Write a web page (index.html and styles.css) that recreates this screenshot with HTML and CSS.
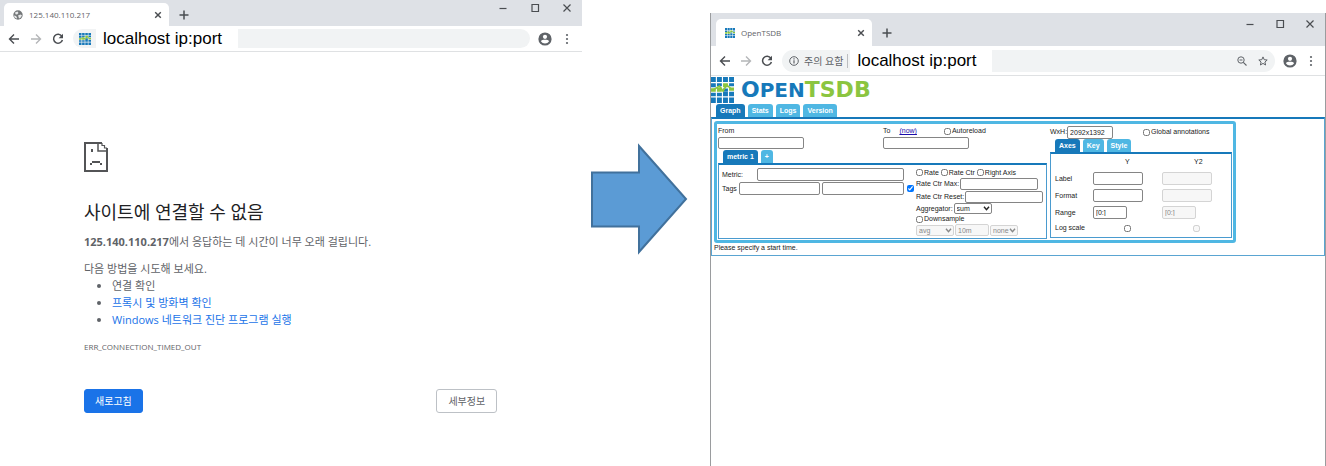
FILE: index.html
```html
<!DOCTYPE html>
<html lang="ko">
<head>
<meta charset="utf-8">
<title>OpenTSDB</title>
<link rel="stylesheet" href="styles.css">
</head>
<body>
<svg class="sprite" aria-hidden="true">
  <symbol id="back" viewBox="0 0 12 12"><path d="M11 6H2M6 1.5 1.5 6 6 10.5" fill="none" stroke="currentColor" stroke-width="1.4"/></symbol>
  <symbol id="forward" viewBox="0 0 12 12"><path d="M1 6h9M6 1.5 10.5 6 6 10.5" fill="none" stroke="currentColor" stroke-width="1.4"/></symbol>
  <symbol id="reload" viewBox="0 0 12 12"><path d="M9.8 3.2A4.5 4.5 0 1 0 10.4 7" fill="none" stroke="currentColor" stroke-width="1.5"/><path d="M11 .8v4.4H6.6z" fill="currentColor"/></symbol>
  <symbol id="dots" viewBox="0 0 12 12"><circle cx="6" cy="2" r="1.1"/><circle cx="6" cy="6" r="1.1"/><circle cx="6" cy="10" r="1.1"/></symbol>
  <symbol id="profile" viewBox="0 0 14 14"><circle cx="7" cy="7" r="6.6"/><circle cx="7" cy="4.8" r="2.1" fill="#fff"/><path d="M2.9 9.3C3.4 7.9 5 7.700 7 7.700s3.600.2 4.100 1.600A4.900 4.900 0 0 1 7 11.600a4.900 4.900 0 0 1-4.100-2.300z" fill="#fff"/></symbol>
  <symbol id="min" viewBox="0 0 10 10"><path d="M1.500 5.500h7" stroke="currentColor" stroke-width="1.200"/></symbol>
  <symbol id="max" viewBox="0 0 10 10"><path d="M2 1.500h6.500v7H2z" fill="none" stroke="currentColor" stroke-width="1.200"/></symbol>
  <symbol id="close" viewBox="0 0 10 10"><path d="m1.500 1.500 7 7m0-7-7 7" fill="none" stroke="currentColor" stroke-width="1.200"/></symbol>
  <symbol id="tab-close" viewBox="0 0 10 10"><path d="m1.500 1.500 7 7m0-7-7 7" fill="none" stroke="currentColor" stroke-width="1.800"/></symbol>
  <symbol id="plus" viewBox="0 0 10 10"><path d="M5 .5v9M.5 5h9" fill="none" stroke="currentColor" stroke-width="1.500"/></symbol>
  <symbol id="globe" viewBox="0 0 10 10"><circle cx="5" cy="5" r="4.700" fill="#747779"/><path d="M2 2.500 4.500 1.500l1 1.500L4 4.500 2.500 4.200zM5 5.500l2.500-1 1.500 1L7.500 7.800 6 8.500 5.500 6.800zM1 5.500 3 6l1 1.500-.5 1.200C2 8 1.200 7 1 5.500z" fill="#e8e9ea"/></symbol>
  <symbol id="mark" viewBox="0 0 22 26" preserveAspectRatio="none">
    <g fill="#1779ba"><path d="M0 0h4.600v5H0zM5.700 0h4.700v5H5.700zM11.500 0h4.700v5h-4.700zM17.300 0H22v5h-4.700zM0 6.200h4.600v4H0zM5.700 6.200h4.700v3H5.700zM17.300 6.200H22v3h-4.700zM11.500 11.500h4.700v3h-4.700zM0 15.800h4.600v3.400H0zM5.700 15.800h4.700v3.400H5.700zM11.500 14.800h4.700v4.400h-4.700zM17.300 14.800H22v4.400h-4.700zM0 20.600h4.600V26H0zM5.700 20.600h4.700V26H5.700zM11.500 20.600h4.700V26h-4.700zM17.300 20.600H22V26h-4.700z"/></g>
    <g fill="#8bc540"><path d="M0 11.200h4.600v3.600H0zM5.700 10.400h4.700v4.400H5.700zM11.500 6.200h4.700v4h-4.700zM17.300 10.400H22v3.400h-4.700z"/><path d="M2 13 8 9l3.500 5L15 8l5 4.500" fill="none" stroke="#8bc540" stroke-width="1.600"/></g>
  </symbol>
  <symbol id="chevron" viewBox="0 0 8 6"><path d="m1 1 3 3.500L7 1" fill="none" stroke="currentColor" stroke-width="1.700"/></symbol>
</svg>

<main class="scene">
  <section class="browser browser-error">
    <header class="tabstrip">
      <div class="tab"><svg class="fav"><use href="#globe"/></svg><span class="tab-title">125.140.110.217</span><button class="icon-btn" aria-label="탭 닫기"><svg class="i8"><use href="#tab-close"/></svg></button></div>
      <button class="icon-btn new-tab" aria-label="새 탭"><svg class="i10"><use href="#plus"/></svg></button>
      <div class="win-controls">
        <button class="icon-btn" aria-label="최소화"><svg class="i10"><use href="#min"/></svg></button>
        <button class="icon-btn" aria-label="최대화"><svg class="i10"><use href="#max"/></svg></button>
        <button class="icon-btn" aria-label="닫기"><svg class="i10"><use href="#close"/></svg></button>
      </div>
    </header>
    <nav class="toolbar">
      <button class="icon-btn" aria-label="뒤로"><svg class="i12"><use href="#back"/></svg></button>
      <button class="icon-btn dim" aria-label="앞으로"><svg class="i12"><use href="#forward"/></svg></button>
      <button class="icon-btn" aria-label="새로고침"><svg class="i12"><use href="#reload"/></svg></button>
      <div class="address"><svg class="site-icon"><use href="#mark"/></svg><span class="url">localhost ip:port</span></div>
      <button class="icon-btn" aria-label="프로필"><svg class="i14"><use href="#profile"/></svg></button>
      <button class="icon-btn menu" aria-label="메뉴"><svg class="i12"><use href="#dots"/></svg></button>
    </nav>
    <article class="error">
      <svg class="sad" viewBox="0 0 24 30"><path d="M18 1H1v28h22V6" fill="none" stroke="#535456" stroke-width="2"/><path d="M14 1v8h9" fill="none" stroke="#535456" stroke-width="1.500"/><path d="M18 1v2.500h2.500V6H23" fill="none" stroke="#535456" stroke-width="1.200"/><path d="M7 7h2v3H7zM8 19h8v2H8zM6 21h2v2H6zM16 21h2v2h-2z" fill="#535456"/></svg>
      <h1>사이트에 연결할 수 없음</h1>
      <p><strong>125.140.110.217</strong>에서 응답하는 데 시간이 너무 오래 걸립니다.</p>
      <div class="suggest">
        <p>다음 방법을 시도해 보세요.</p>
        <ul>
          <li>연결 확인</li>
          <li><a href="#proxy">프록시 및 방화벽 확인</a></li>
          <li><a href="#diagnose">Windows 네트워크 진단 프로그램 실행</a></li>
        </ul>
      </div>
      <p class="code">ERR_CONNECTION_TIMED_OUT</p>
      <div class="actions"><button class="btn primary">새로고침</button><button class="btn">세부정보</button></div>
    </article>
  </section>

  <svg class="arrow" viewBox="0 0 98 112"><path d="M2 29.500h47V3l47 53-47 53V83.500H2z" fill="#5b9bd5" stroke="#41719c" stroke-width="2"/></svg>

  <section class="browser browser-tsdb">
    <header class="tabstrip">
      <div class="tab"><svg class="fav"><use href="#mark"/></svg><span class="tab-title">OpenTSDB</span><button class="icon-btn" aria-label="탭 닫기"><svg class="i8"><use href="#tab-close"/></svg></button></div>
      <button class="icon-btn new-tab" aria-label="새 탭"><svg class="i10"><use href="#plus"/></svg></button>
      <div class="win-controls">
        <button class="icon-btn" aria-label="최소화"><svg class="i10"><use href="#min"/></svg></button>
        <button class="icon-btn" aria-label="최대화"><svg class="i10"><use href="#max"/></svg></button>
        <button class="icon-btn" aria-label="닫기"><svg class="i10"><use href="#close"/></svg></button>
      </div>
    </header>
    <nav class="toolbar">
      <button class="icon-btn" aria-label="뒤로"><svg class="i12"><use href="#back"/></svg></button>
      <button class="icon-btn dim" aria-label="앞으로"><svg class="i12"><use href="#forward"/></svg></button>
      <button class="icon-btn" aria-label="새로고침"><svg class="i12"><use href="#reload"/></svg></button>
      <div class="address">
        <svg class="info" viewBox="0 0 10 10"><circle cx="5" cy="5" r="4.300" fill="none" stroke="#5f6368"/><path d="M5 4.300v3.200M5 2.300v1.200" stroke="#5f6368" stroke-width="1.200"/></svg>
        <span class="warn">주의 요함</span>
        <span class="url">localhost ip:port</span>
        <span class="address-tools">
          <svg class="i10" viewBox="0 0 10 10"><circle cx="4" cy="4" r="3.200" fill="none" stroke="#5f6368"/><path d="M2.500 4h3M6.300 6.300 9.500 9.500" stroke="#5f6368" stroke-width="1.100"/></svg>
          <svg class="i10" viewBox="0 0 10 10"><path d="m5 .9 1.200 2.800 3 .3-2.300 2 .7 3L5 7.400 2.400 9l.7-3L.8 4l3-.3z" fill="none" stroke="#5f6368"/></svg>
        </span>
      </div>
      <button class="icon-btn" aria-label="프로필"><svg class="i14"><use href="#profile"/></svg></button>
      <button class="icon-btn menu" aria-label="메뉴"><svg class="i12"><use href="#dots"/></svg></button>
    </nav>

    <div class="tsdb">
      <div class="logo"><svg class="logo-mark"><use href="#mark"/></svg><span class="logo-text">O<small>PEN</small><b>TSDB</b></span></div>
      <div class="tabs"><button class="active">Graph</button><button>Stats</button><button>Logs</button><button>Version</button></div>
      <div class="page">
        <form class="query">
          <div class="left">
            <div class="dates">
              <div class="date"><label for="from">From</label><input id="from" type="text"></div>
              <div class="date"><span class="to-line"><label for="to">To</label><a href="#now">(now)</a><label class="check auto"><input type="checkbox">Autoreload</label></span><input id="to" type="text"></div>
            </div>
            <div class="tabs"><button type="button" class="active">metric 1</button><button type="button">+</button></div>
            <div class="box metric">
              <div class="metric-left">
                <div class="line"><label for="metric" class="metric-label">Metric:</label><input id="metric" class="grow" type="text"></div>
                <div class="line"><label for="tagk">Tags</label><input id="tagk" class="grow" type="text"><input class="grow" type="text" aria-label="Tag value"></div>
              </div>
              <input class="tag-check" type="checkbox" checked aria-label="Group by">
              <div class="metric-right">
                <div class="checks"><label class="check"><input type="checkbox">Rate</label><label class="check"><input type="checkbox">Rate Ctr</label><label class="check"><input type="checkbox">Right Axis</label></div>
                <div class="pair"><label for="max-v">Rate Ctr Max:</label><input id="max-v" class="w78" type="text"></div>
                <div class="pair"><label for="reset-v">Rate Ctr Reset:</label><input id="reset-v" class="w78" type="text"></div>
                <div class="pair agg"><label for="agg">Aggregator:</label><span class="select w38"><select id="agg"><option>sum</option></select><svg><use href="#chevron"/></svg></span></div>
                <label class="check"><input type="checkbox">Downsample</label>
                <div class="pair down"><span class="select w38"><select disabled aria-label="Downsampler"><option>avg</option></select><svg><use href="#chevron"/></svg></span><input class="w34" type="text" value="10m" disabled aria-label="Interval"><span class="select w28"><select disabled aria-label="Fill policy"><option>none</option></select><svg><use href="#chevron"/></svg></span></div>
              </div>
            </div>
          </div>
          <div class="right">
            <div class="size"><label for="wxh">WxH:</label><input id="wxh" class="w46" type="text" value="2092x1392"><label class="check"><input type="checkbox">Global annotations</label></div>
            <div class="tabs"><button type="button" class="active">Axes</button><button type="button">Key</button><button type="button">Style</button></div>
            <div class="box">
              <table class="axes">
                <thead><tr><td></td><th>Y</th><th>Y2</th></tr></thead>
                <tbody>
                  <tr><th>Label</th><td><input class="w50" type="text" aria-label="Y label"></td><td><input class="w50" type="text" disabled aria-label="Y2 label"></td></tr>
                  <tr><th>Format</th><td><input class="w50" type="text" aria-label="Y format"></td><td><input class="w50" type="text" disabled aria-label="Y2 format"></td></tr>
                  <tr><th>Range</th><td><input class="w34" type="text" value="[0:]" aria-label="Y range"></td><td><input class="w34" type="text" value="[0:]" disabled aria-label="Y2 range"></td></tr>
                  <tr class="log"><th>Log scale</th><td><input type="checkbox" aria-label="Y log scale"></td><td><input type="checkbox" disabled aria-label="Y2 log scale"></td></tr>
                </tbody>
              </table>
            </div>
          </div>
        </form>
        <p class="status">Please specify a start time.</p>
      </div>
    </div>
  </section>
</main>
</body>
</html>
```
FILE: styles.css
```css
* { box-sizing: border-box; }
body { margin: 0; background: #fff; font-family: "Open Sans", "Noto Sans CJK KR", sans-serif; color: #5f6368; }
h1, p, ul { margin: 0; }
button, input, select { font: inherit; color: inherit; margin: 0; }
svg { display: block; flex: none; }
.sprite { position: absolute; width: 0; height: 0; }
.i8 { width: 8px; height: 8px; }
.i10 { width: 10px; height: 10px; }
.i12 { width: 12px; height: 12px; }
.i14 { width: 14px; height: 14px; }

.scene { display: grid; grid-template-columns: minmax(0, 582fr) minmax(0, 128fr) minmax(0, 616fr); min-height: 100vh; }
.arrow { width: 98px; height: 112px; margin: 143px 0 0 8px; }

/* Browser chrome */
.icon-btn { display: grid; place-items: center; padding: 0; border: 0; background: none; color: #4a4d51; fill: #5f6368; }
.dim { color: #b4b6b8; }
.tabstrip { display: flex; background: #dee1e6; padding: 3px 10px 0 4px; height: 26px; }
.tab { display: flex; align-items: center; width: 165px; padding: 0 7px 0 9px; background: #fff; border-radius: 5px 5px 0 0; font-size: 8px; }
.fav { width: 10px; height: 10px; }
.tab-title { flex: 1; padding-left: 6px; }
.new-tab { margin-left: 10px; }
.win-controls { display: flex; align-items: flex-start; gap: 22px; margin-left: auto; }
.toolbar { display: flex; align-items: center; height: 26px; padding: 0 9px 0 8px; gap: 10px; border-bottom: 1px solid #dfe1e3; }
.address { display: flex; align-items: center; flex: 1; height: 19px; margin-right: -2px; margin-left: -1px; padding-left: 6px; border-radius: 10px; background: #f1f3f4; }
.toolbar .menu { margin-left: -1px; }
.site-icon { width: 12px; height: 12px; }
.url { margin-left: 5px; width: 142px; padding-left: 7px; background: #fff; color: #000; font: 17px/24px "Liberation Sans", Arial, sans-serif; }

.browser-tsdb { margin-top: 13px; border: solid #9a9c9e; border-width: 0 1px; }
.browser-tsdb .tabstrip { height: 33px; padding: 6px 10px 0 5px; }
.browser-tsdb .tab { width: 156px; }
.browser-tsdb .win-controls { gap: 20px; }
.browser-tsdb .toolbar { height: 30px; padding: 0 8px; gap: 9px; }
.browser-tsdb .address { height: 22px; border-radius: 11px; margin: 0 -1px 0 0; padding-left: 7px; }
.info { width: 10px; height: 10px; }
.warn { padding: 0 4px 0 5px; border-right: 1px solid #bbbdc0; font-size: 10px; line-height: 14px; }
.browser-tsdb .url { margin-left: 2px; }
.address-tools { display: flex; gap: 11px; margin-left: auto; padding-right: 7px; }

/* Connection error */
.error { width: 71%; margin-left: 84px; padding-top: 90px; font-size: 11px; line-height: 17px; }
.sad { width: 24px; height: 30px; }
.error h1 { margin: 28px 0 9px; color: #202124; font-size: 18px; line-height: 24px; font-weight: 400; }
.suggest { margin-top: 10px; }
.suggest ul { padding-left: 28px; }
.error a { color: #1a73e8; text-decoration: none; }
.code { margin-top: 10px; font-size: 8px; }
.actions { display: flex; justify-content: space-between; margin-top: 34px; }
.btn { height: 24px; padding: 0 11px; border: 1px solid #bdc1c6; border-radius: 3px; background: #fff; font-size: 10px; line-height: 16px; }
.primary { padding: 0 10px; border-color: #1a73e8; background: #1a73e8; color: #fff; }

/* OpenTSDB */
.tsdb { color: #222; font: 7px/10px "Liberation Sans", Arial, sans-serif; white-space: nowrap; }
.logo { display: flex; align-items: center; gap: 7px; height: 28px; padding-bottom: 1px; }
.logo-mark { width: 23px; height: 26px; }
.logo-text { color: #1779ba; font: bold 22px/26px "DejaVu Sans", sans-serif; }
.logo-text small { font-size: 20px; }
.logo-text b { color: #8bc540; }
.tabs { display: flex; gap: 3px; padding-left: 5px; }
.tabs button { height: 13px; padding: 0 4px; border: 0; border-radius: 3px 3px 0 0; background: #4fb7e3; color: #fff; font-weight: bold; line-height: 13px; }
.tabs .active { background: #1779ba; }
.page { border: 1px solid #5aa5d2; border-top: 2px solid #1779ba; padding: 2px; }
.query { display: flex; gap: 3px; width: 522px; max-width: 100%; padding: 1px; border: 3px solid #4fb7e3; border-radius: 3px; }
.left { flex: 1; min-width: 0; }
.right { flex: none; width: 182px; }
.box { border: 1px solid #4a9bcf; border-top: 2px solid #1779ba; }
.tsdb input, .tsdb select { border: 1px solid #858585; border-radius: 2px; background: #fff; }
.tsdb input[type="text"] { height: 13px; padding: 0 2px; min-width: 0; }
.tsdb input[type="checkbox"] { width: 7px; height: 7px; flex: none; }
.tsdb input:disabled, .tsdb select:disabled { border-color: #d4d4d4; background: #f7f7f7; color: #888; opacity: 1; }
.check { display: flex; align-items: center; gap: 1px; }
.dates { display: flex; gap: 79px; padding: 1px 0; }
.date { display: flex; flex-direction: column; align-items: flex-start; gap: 1px; width: 86px; }
.tsdb .date input[type="text"] { width: 86px; height: 12px; }
.to-line { display: flex; gap: 9px; }
.to-line a { color: #1a0dab; }
.auto { margin-left: 18px; }
.metric { display: flex; height: 76px; padding: 3px; }
.metric-left { flex: none; width: 182px; }
.line { display: flex; align-items: center; gap: 2px; margin-bottom: 1px; }
.metric-label { width: 33px; }
.grow { flex: 1; }
.tag-check { margin: 17px 2px 0 3px; }
.checks { display: flex; gap: 2px; height: 9px; }
.pair { display: flex; align-items: center; gap: 1px; height: 13px; }
.tsdb .pair input { flex: none; height: 12px; }
.pair.agg { height: 11px; }
.pair.down { height: 12px; }
.w78 { width: 78px; }
.w50 { width: 50px; }
.w46 { width: 46px; }
.w38 { width: 38px; }
.w34 { width: 34px; }
.w28 { width: 28px; }
.select { position: relative; }
.select select { display: block; width: 100%; height: 11px; padding: 0 2px; appearance: none; }
.select svg { position: absolute; right: 2px; top: 3px; width: 7px; height: 5px; }
.down { color: #888; }
.size { display: flex; align-items: center; height: 14px; }
.size .check { margin-left: 30px; }
.axes { width: 100%; border-collapse: collapse; table-layout: fixed; margin-bottom: 2px; }
.axes th, .axes td { height: 17px; padding: 0; font-weight: normal; text-align: left; line-height: 10px; vertical-align: middle; }
.axes tr > :first-child { width: 42px; padding-left: 4px; }
.axes thead th { height: 16px; padding-left: 32px; }
.axes thead td { height: 16px; }
.axes input { display: block; }
.axes .log td { padding-left: 31px; }
.axes .log > * { height: 14px; }
```
